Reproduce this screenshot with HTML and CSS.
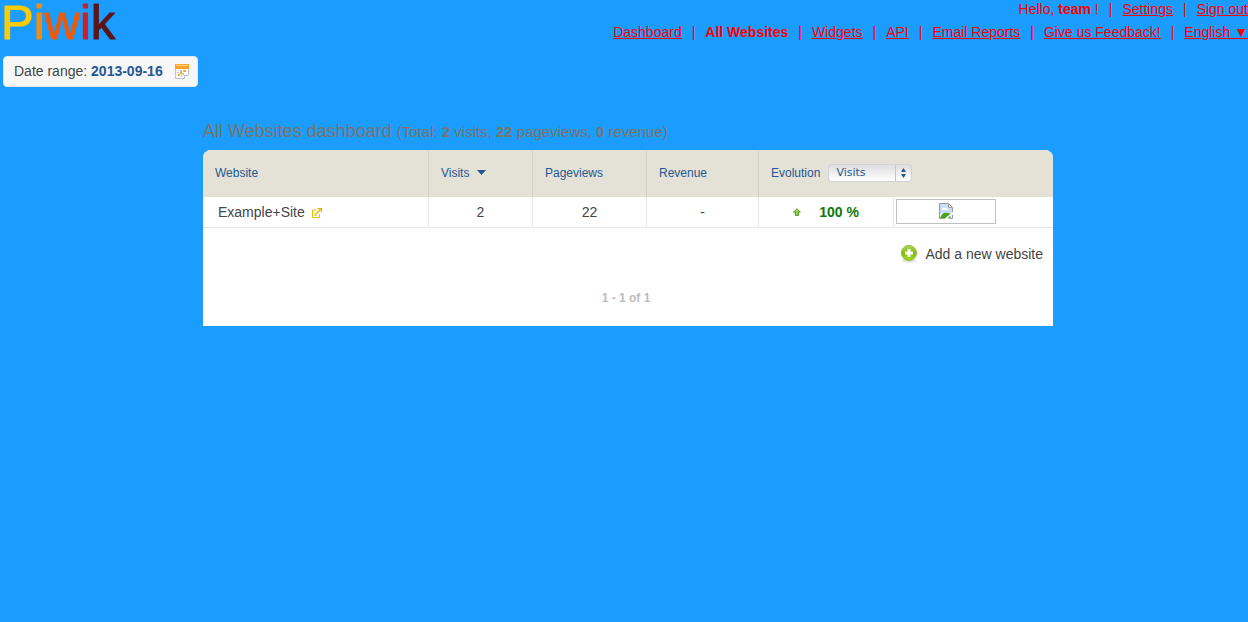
FILE: index.html
```html
<!DOCTYPE html>
<html lang="en">
<head>
<meta charset="utf-8">
<title>All Websites dashboard - Piwik</title>
<link rel="stylesheet" href="styles.css">
</head>
<body>
<header class="header">
  <a class="logo" href="#" aria-label="Piwik">
    <svg width="122" height="44" viewBox="0 0 122 44">
      <text x="1" y="39"><tspan class="logo-p">P</tspan><tspan class="logo-i">i</tspan><tspan class="logo-w">w</tspan><tspan class="logo-i2">i</tspan><tspan class="logo-k">k</tspan></text>
    </svg>
  </a>
  <div class="menus">
    <nav class="menu" aria-label="Account">
      <span>Hello, <strong>team</strong> !</span>
      <span>|</span>
      <a href="#">Settings</a>
      <span>|</span>
      <a href="#">Sign out</a>
    </nav>
    <nav class="menu" aria-label="Main">
      <a href="#">Dashboard</a>
      <span>|</span>
      <strong>All Websites</strong>
      <span>|</span>
      <a href="#">Widgets</a>
      <span>|</span>
      <a href="#">API</a>
      <span>|</span>
      <a href="#">Email Reports</a>
      <span>|</span>
      <a href="#">Give us Feedback!</a>
      <span>|</span>
      <a href="#">English ▼</a>
    </nav>
  </div>
</header>

<button class="period" type="button">
  <span>Date range: <strong>2013-09-16</strong></span>
  <svg width="14" height="15" viewBox="0 0 14 15" aria-hidden="true">
    <path d="M.5 .5h13v10l-4 4h-9z" fill="#fdfdfd" stroke="#c4c4c4"/>
    <path d="M0 0h14v5H0z" fill="#f7a427"/>
    <path d="M1 1h12v1H1z" fill="#fdd48c"/>
    <path d="M9.500 14.500v-3h4" fill="#fff" stroke="#bdbdbd"/>
    <path d="M5 6h2v2H5zM8 6h1v2H8zM2 8h2v1H2zM3 6h1v1H3zM7 9h2v2H7z" fill="#c5c5c5"/>
    <path d="M9 6h2v2H9zM5 8h2v2H5zM3 10h2v2H3zM6 11h1v1H6z" fill="#f6a52c"/>
  </svg>
</button>

<main class="content">
  <h1 class="title">All Websites dashboard <span class="totals">(Total: <strong>2</strong> visits, <strong>22</strong> pageviews, <strong>0</strong> revenue)</span></h1>
  <div class="panel">
    <table class="sites">
      <colgroup>
        <col class="col-site"><col class="col-visits"><col class="col-views"><col class="col-revenue"><col class="col-evolution"><col>
      </colgroup>
      <thead>
        <tr>
          <th scope="col">Website</th>
          <th scope="col">Visits <svg class="sort" width="9" height="5" viewBox="0 0 9 5" aria-hidden="true"><path d="M0 0h9L4.500 5z" fill="#255792"/></svg></th>
          <th scope="col">Pageviews</th>
          <th scope="col">Revenue</th>
          <th scope="col" colspan="2">
            <div class="evolution">
              <label for="metric">Evolution</label>
              <span class="picker">
                <select id="metric"><option>Visits</option><option>Pageviews</option><option>Revenue</option></select>
                <svg class="picker-arrows" width="5" height="10" viewBox="0 0 5 10" aria-hidden="true"><path d="M0 4L2.500 0 5 4zM0 6h5L2.500 10z" fill="#255792"/></svg>
              </span>
            </div>
          </th>
        </tr>
      </thead>
      <tbody>
        <tr>
          <td class="site">
            <a href="#">Example+Site</a>
            <a class="external" href="#" aria-label="Open website"><svg width="10" height="10" viewBox="0 0 10 10"><path d="M4.500 2H.5v7.500H7.500V6" fill="none" stroke="#f0b90c"/><path d="M2 7h3v1H2zM2 5h1v1H2z" fill="#f3cb4c"/><path d="M3.500 6.500L8.500 1.500M5.500.5h4v4" fill="none" stroke="#edb200" stroke-width="1.300"/></svg></a>
          </td>
          <td>2</td>
          <td>22</td>
          <td>-</td>
          <td>
            <div class="growth">
              <svg width="8" height="8" viewBox="0 0 8 8" aria-hidden="true"><path d="M4 .7L7.400 4.200H5.500v3.200h-3V4.200H.6z" fill="#98d33f" stroke="#4b8b22" stroke-width=".9"/></svg>
              <strong>100 %</strong>
            </div>
          </td>
          <td class="spark">
            <div class="missing" role="img" aria-label="Sparkline">
              <svg width="14" height="16" viewBox="0 0 14 16" aria-hidden="true">
                <path d="M.5 .5h9l4 4v11H.5z" fill="#fff"/>
                <path d="M1 1h8v4h4v6H1z" fill="#c9dcfa"/>
                <path d="M3 6q1-3 3-1 2-1 3 2H3z" fill="#fff"/>
                <path d="M1 15q2-6 8-5l3 1-5 4z" fill="#4aa51c"/>
                <path d="M14 9.500L6.500 16" stroke="#fff" stroke-width="1.500"/>
                <path d="M8.500 15.500l3-3v3z" fill="#4aa51c"/>
                <path d="M6 15.500H.5V.5h9l4 4V9M9.500 .5v4h4M13.500 12v3.500H11" fill="none" stroke="#9a9a9a"/>
              </svg>
            </div>
          </td>
        </tr>
      </tbody>
    </table>
    <div class="add">
      <a href="#">
        <svg width="18" height="19" viewBox="0 0 18 19" aria-hidden="true">
          <defs><linearGradient id="green" x1="0" y1="0" x2="0" y2="1"><stop offset="0" stop-color="#b2d94e"/><stop offset=".5" stop-color="#82b916"/><stop offset="1" stop-color="#9fe019"/></linearGradient></defs>
          <ellipse cx="9" cy="16.500" rx="7" ry="2" fill="#e2e2e2"/>
          <circle cx="9" cy="9" r="7.500" fill="url(#green)" stroke="#8cc02c"/>
          <path d="M7.500 5h3v2.500H13v3h-2.500V13h-3v-2.500H5v-3h2.500z" fill="#fff"/>
        </svg>
        <span>Add a new website</span>
      </a>
    </div>
    <p class="paging">1 - 1 of 1</p>
  </div>
</main>
</body>
</html>
```
FILE: styles.css
```css
* {
  box-sizing: border-box;
}

body {
  margin: 0;
  background: #1a9dff;
  color: #444;
  font: 14px/16px "Liberation Sans", Arial, sans-serif;
}

.header {
  display: flex;
  justify-content: space-between;
  align-items: flex-start;
  height: 56px;
}

.logo svg {
  display: block;
  overflow: visible;
}

.logo text {
  font: 49px "Liberation Sans", Arial, sans-serif;
  stroke-width: 1px;
  stroke-linejoin: round;
}

.logo-p { fill: #fc0; stroke: #fc0; }
.logo-i { fill: #f68b0c; stroke: #f68b0c; }
.logo-w { fill: #ec5a0c; stroke: #ec5a0c; }
.logo-i2 { fill: #cb2026; stroke: #cb2026; }
.logo-k { fill: #5c1519; stroke: #5c1519; }

.menus {
  display: flex;
  flex-direction: column;
  align-items: flex-end;
  gap: 7px;
  padding-top: 1px;
}

.menu {
  display: flex;
  gap: 10px;
  color: #f00;
}

.menu a {
  color: inherit;
}

.period {
  display: flex;
  align-items: center;
  gap: 12px;
  margin-left: 3px;
  padding: 6px 8px 7px 10px;
  border: 1px solid #e4e5e4;
  border-radius: 4px;
  background: #f7f7f7;
  color: #444;
  font: inherit;
}

.period strong {
  color: #255792;
}

.content {
  max-width: 858px;
  margin: 34px auto 0;
  padding-left: 8px;
}

.title {
  margin: 0 0 8px;
  color: #7e7363;
  font-size: 18px;
  line-height: 20px;
  font-weight: normal;
}

.totals {
  font-size: 15px;
}

.panel {
  overflow: hidden;
  border-radius: 8px 8px 0 0;
  background: #fff;
}

.sites {
  width: 100%;
  table-layout: fixed;
  border-collapse: separate;
  border-spacing: 0;
}

.col-site { width: 225px; }
.col-visits { width: 104px; }
.col-views { width: 114px; }
.col-revenue { width: 112px; }
.col-evolution { width: 135px; }

.sites th {
  height: 47px;
  padding: 0 12px 2px;
  background: #e4e2d7;
  color: #255792;
  font-size: 12px;
  font-weight: normal;
  text-align: left;
}

.sites th + th {
  border-left: 1px solid #d3d1c5;
}

.sites td {
  height: 31px;
  padding: 0;
  border-bottom: 1px solid #e7e7e7;
  text-align: center;
}

.sites td + td {
  border-left: 1px solid #e7e7e7;
}

.sites .site {
  padding-left: 15px;
  text-align: left;
}

.site a,
.add a {
  color: #444;
  text-decoration: none;
}

.external svg {
  margin-left: 3px;
  vertical-align: -1px;
}

.sort {
  margin-left: 4px;
  vertical-align: 2px;
}

.evolution {
  display: flex;
  align-items: center;
  gap: 8px;
}

.picker {
  position: relative;
  display: flex;
}

.picker select {
  appearance: none;
  width: 84px;
  height: 18px;
  padding: 0 20px 0 7px;
  border: 1px solid #d2d3d6;
  border-radius: 4px;
  background: linear-gradient(90deg, transparent 66px, #c5c6c9 66px, #c5c6c9 67px, transparent 67px), linear-gradient(#dedee0, #fff);
  color: #255792;
  font: 11px/16px "DejaVu Sans", sans-serif;
}

.picker-arrows {
  position: absolute;
  top: 4px;
  right: 6px;
  pointer-events: none;
}

.growth {
  display: flex;
  align-items: center;
  justify-content: center;
  gap: 18px;
  color: #0a7a0a;
}

.sites .spark {
  padding: 0 0 2px 2px;
}

.missing {
  display: flex;
  align-items: center;
  justify-content: center;
  width: 100px;
  height: 25px;
  border: 1px solid #c0c0c0;
}

.add {
  display: flex;
  justify-content: flex-end;
  padding: 16px 10px 0 0;
}

.add a {
  display: flex;
  align-items: center;
  gap: 7px;
}

.paging {
  margin: 0;
  padding: 27px 4px 20px 0;
  color: #bbb;
  font-size: 12px;
  font-weight: bold;
  text-align: center;
}
```
